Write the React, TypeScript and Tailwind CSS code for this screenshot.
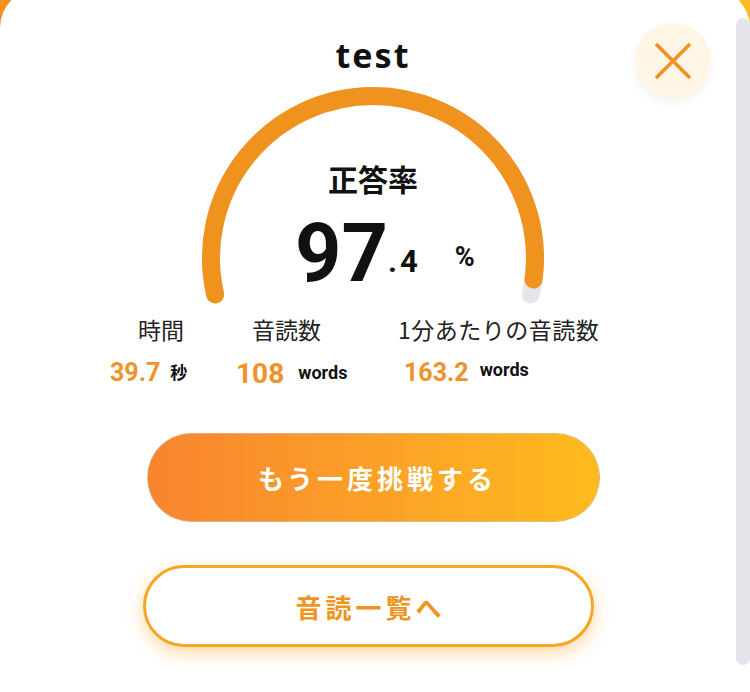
import React from "react";

const cx = 186;
const cy = 180;
const r = 162;
const a = (13 * Math.PI) / 180;
const lx = cx - r * Math.cos(a);
const ly = cy + r * Math.sin(a);
const rx = cx + r * Math.cos(a);
const arcPath = `M ${lx} ${ly} A ${r} ${r} 0 1 1 ${rx} ${ly}`;

function Gauge() {
  return (
    <svg className="absolute inset-0" width="372" height="228" viewBox="0 0 372 228">
      <path d={arcPath} fill="none" stroke="#e4e6eb" strokeWidth="18" strokeLinecap="round" />
      <path
        d={arcPath}
        fill="none"
        stroke="#f0921e"
        strokeWidth="18"
        strokeLinecap="round"
        pathLength={100}
        strokeDasharray="97.4 200"
      />
    </svg>
  );
}

export default function App() {
  const jp = { fontFamily: '"Noto Sans CJK JP", "Noto Sans", sans-serif' };
  const rb = { fontFamily: 'Roboto, "Noto Sans CJK JP", sans-serif' };
  return (
    <div className="w-[750px] h-[692px] overflow-hidden bg-gradient-to-r from-[#f3901e] to-[#fcbb24]">
      <div className="mt-[-12px] h-[720px] bg-white rounded-t-[40px] flex">
        <div className="relative flex-1 flex flex-col pl-[10px]">
          <button className="absolute right-[25px] top-[35px] w-[76px] h-[76px] rounded-full bg-[#fff6e6] shadow-[0_4px_10px_rgba(0,0,0,0.05)] flex items-center justify-center">
            <svg width="76" height="76" viewBox="0 0 76 76">
              <path d="M21 21 L55 55 M55 21 L21 55" stroke="#f0921e" strokeWidth="3.5" strokeLinecap="butt" />
            </svg>
          </button>

          <div
            className="mt-[50px] text-center text-[34px] leading-none font-bold tracking-[0.06em] text-[#111]"
            style={{ fontFamily: '"Noto Sans", sans-serif' }}
          >
            test
          </div>

          <div className="relative mt-[6px] w-[372px] h-[228px] self-center">
            <Gauge />
            <div className="relative flex flex-col items-center pt-[85px]">
              <div className="text-[30px] leading-none font-bold text-[#111]" style={jp}>
                正答率
              </div>
              <div className="mt-[20px] flex items-end self-start ml-[108px] text-[#111]" style={rb}>
                <span className="text-[81px] leading-none font-bold">97</span>
                <span className="text-[31px] leading-none font-bold tracking-[3px] mb-[17px]">.4</span>
                <span className="text-[27px] leading-none font-bold mb-[23px] ml-[34px]">%</span>
              </div>
            </div>
          </div>

          <div className="mt-[12px] ml-[100px] flex text-[#222]">
            <div className="w-[126px] flex flex-col">
              <div className="ml-[28px] text-[23px] leading-none" style={jp}>時間</div>
              <div className="mt-[19px] flex items-center">
                <span className="text-[25px] leading-none font-bold text-[#f0922a]" style={rb}>39.7</span>
                <span className="ml-[10px] mb-[3px] text-[17px] leading-none font-bold text-[#111]" style={jp}>秒</span>
              </div>
            </div>
            <div className="w-[162px] flex flex-col">
              <div className="ml-[16px] text-[23px] leading-none" style={jp}>音読数</div>
              <div className="mt-[19px] flex items-center">
                <span className="text-[28px] leading-none font-bold text-[#f0922a]" style={rb}>108</span>
                <span className="ml-[14px] mb-[3px] text-[18px] leading-none font-bold text-[#111]" style={rb}>words</span>
              </div>
            </div>
            <div className="flex flex-col">
              <div className="text-[23px] leading-none tracking-[0.5px]" style={jp}>1分あたりの音読数</div>
              <div className="mt-[19px] ml-[6px] flex items-center">
                <span className="text-[25px] leading-none font-bold text-[#f0922a]" style={rb}>163.2</span>
                <span className="ml-[11px] mb-[5px] text-[18px] leading-none font-bold text-[#111]" style={rb}>words</span>
              </div>
            </div>
          </div>

          <button
            className="mt-[45px] ml-[137px] w-[453px] h-[89px] rounded-full bg-gradient-to-r from-[#f8842e] to-[#fdbb1c] border border-[#c9c3bd]/60 text-white text-[26px] font-bold tracking-[4px] pl-[8px] flex items-center justify-center"
            style={jp}
          >
            もう一度挑戦する
          </button>

          <button
            className="mt-[43px] ml-[133px] w-[451px] h-[82px] rounded-full bg-white border-[3px] border-[#f5a623] shadow-[0_6px_18px_rgba(251,170,50,0.45)] text-[#ee9420] text-[26px] font-bold tracking-[4px] pl-[4px] flex items-center justify-center"
            style={jp}
          >
            音読一覧へ
          </button>
        </div>
        <div className="w-[14px] mt-[30px] h-[647px] rounded-full bg-[#e4e5ea]" />
      </div>
    </div>
  );
}
